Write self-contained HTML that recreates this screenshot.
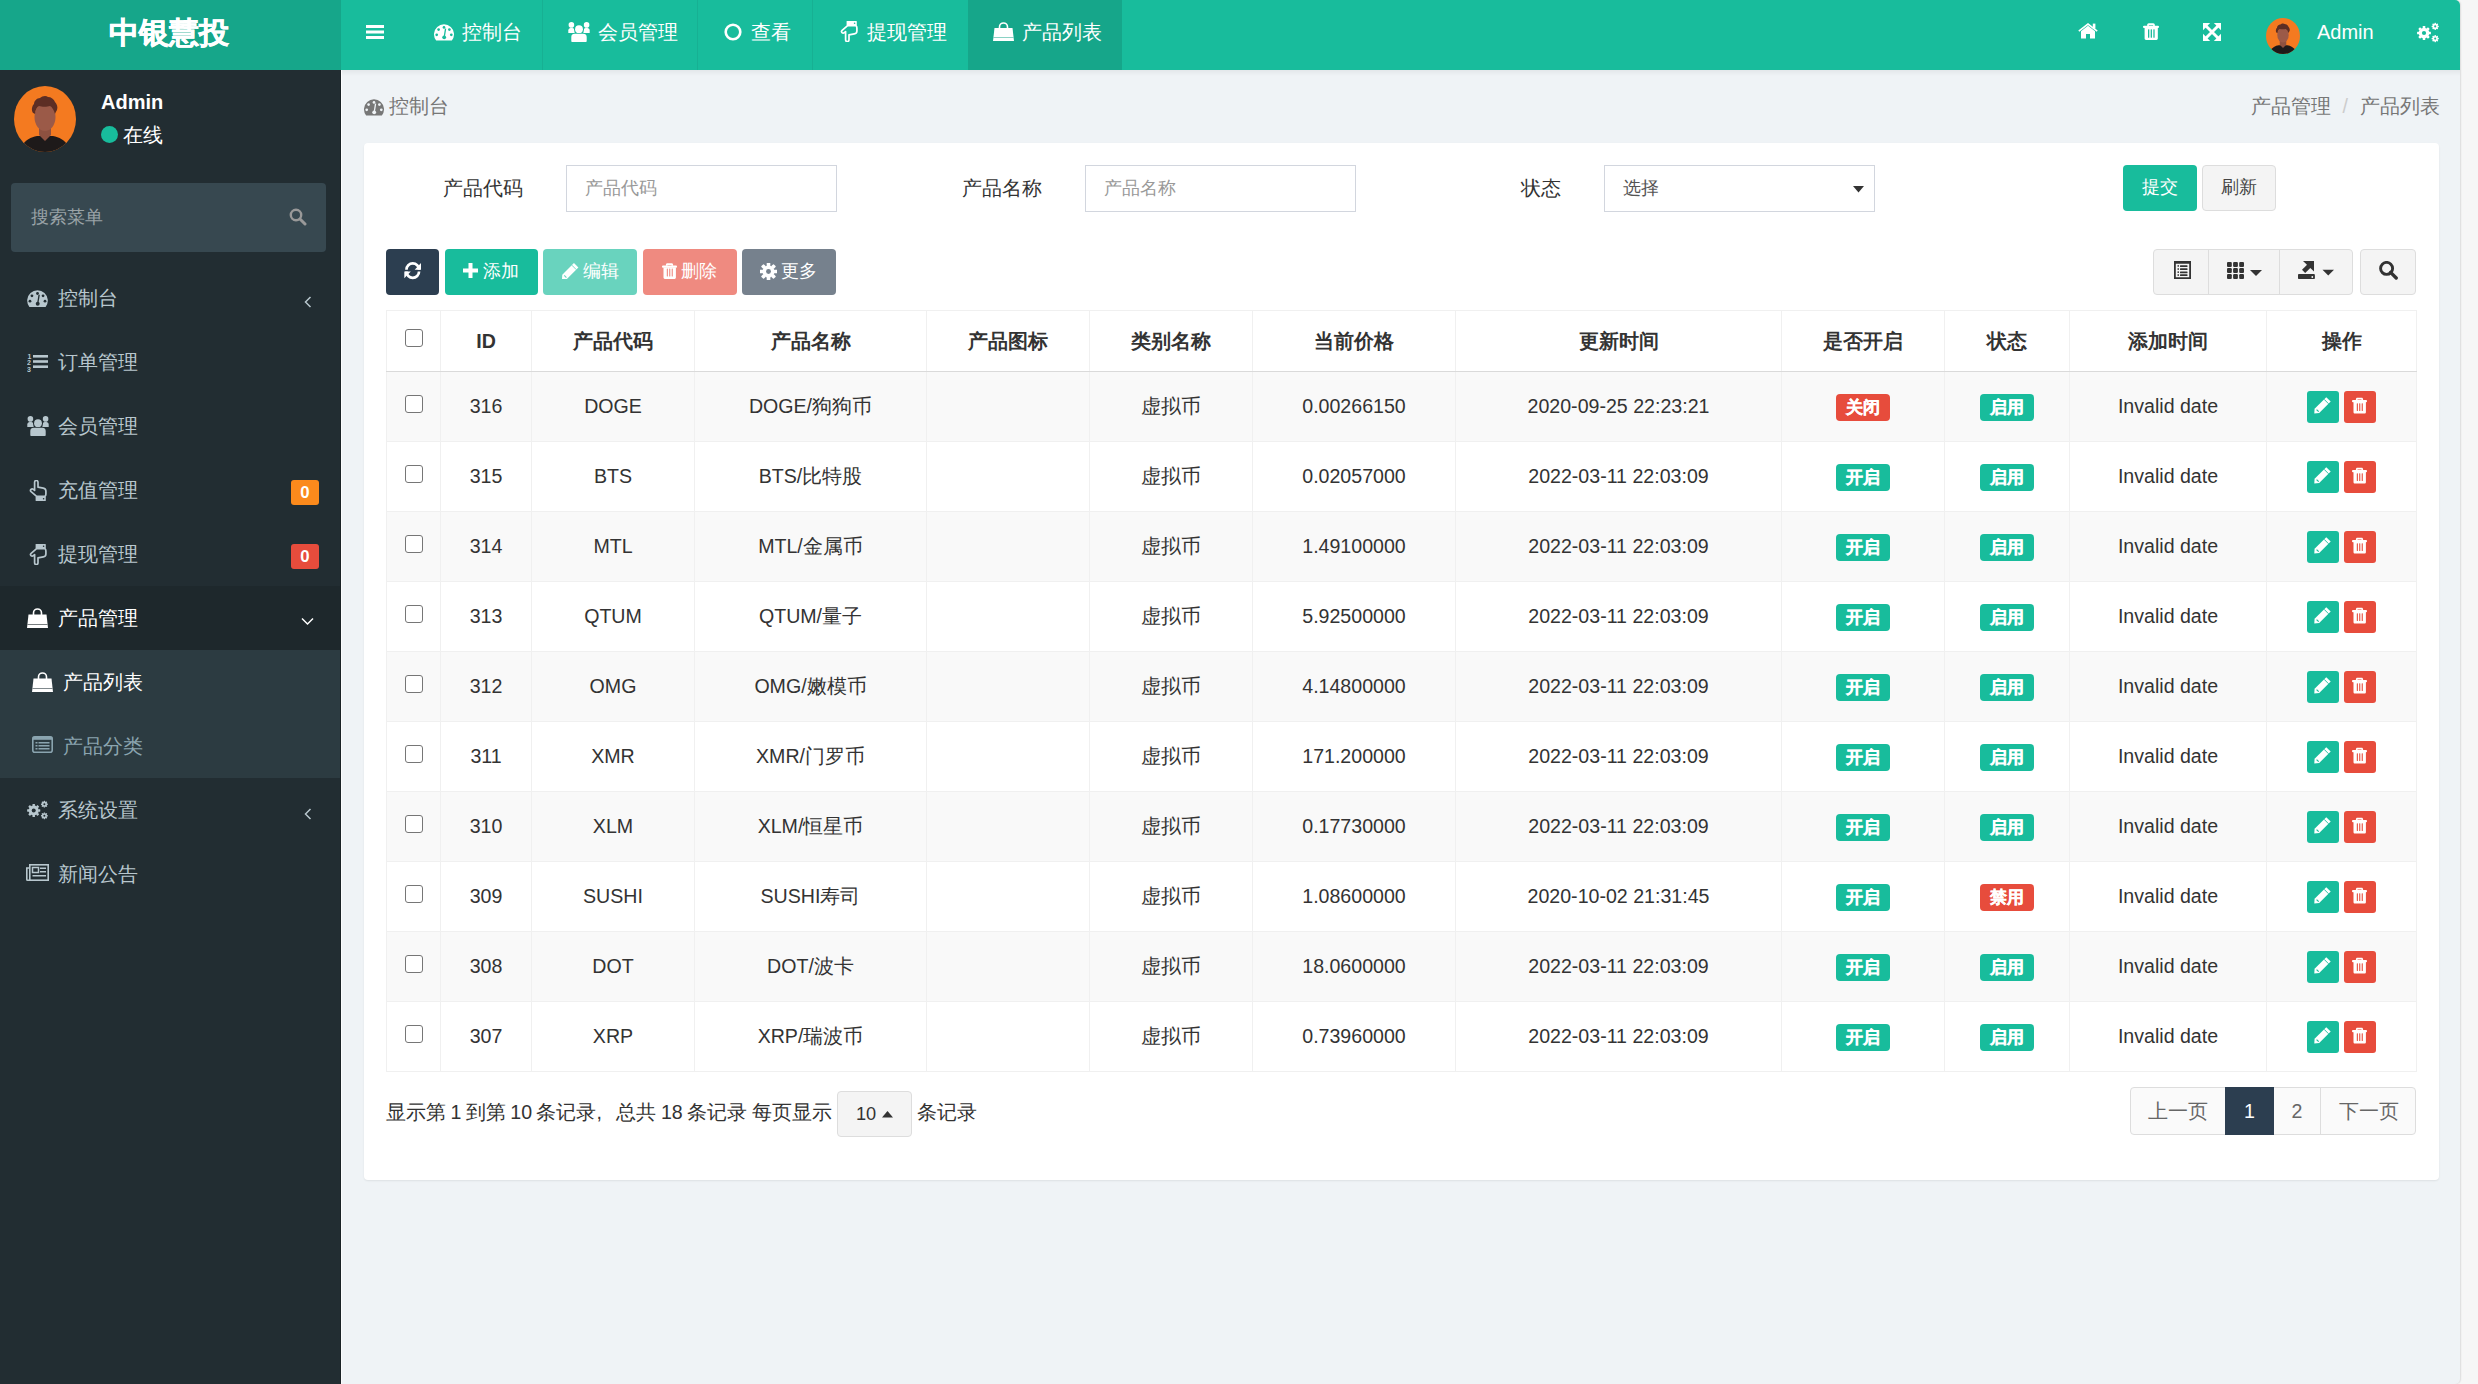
<!DOCTYPE html>
<html><head><meta charset="utf-8">
<style>
*{box-sizing:border-box}
html,body{margin:0;padding:0}
body{width:2478px;height:1384px;overflow:hidden;background:#f6f6f6;font-family:"Liberation Sans",sans-serif;color:#333;position:relative}
.abs{position:absolute}
.wrap{position:absolute;left:0;top:0;width:2460px;height:1384px;background:#eff3f6;border-radius:0 5px 5px 0;overflow:hidden;box-shadow:1px 0 1.5px rgba(0,0,0,.1)}
.logo{left:0;top:0;width:341px;height:70px;background:#16a68a;color:#fff;font-weight:bold;font-size:30px;line-height:66px;text-align:center;text-indent:-3px;-webkit-text-stroke:0.5px #fff}
.nav{left:341px;top:0;width:2120px;height:70px;background:#18bc9c}
.tab{position:absolute;top:0;height:70px;color:#fff;font-size:19.6px;line-height:70px;white-space:nowrap}
.tab span{top:-3px}
.sep{position:absolute;top:0;width:1px;height:70px;background:#17b093}
.side{left:0;top:70px;width:341px;height:1314px;background:#222d32;border-right:1px solid #1a2226}
.content{left:341px;top:70px;width:2120px;height:1314px;border-left:1px solid #fbfcfd}
.mi{position:absolute;left:0;width:340px;height:64px;color:#b8c7ce;font-size:19.6px;line-height:64px;white-space:nowrap}
.mi .ic{position:absolute;top:0;height:64px;display:flex;align-items:center}
.mi .tx{position:absolute;left:58px;top:0}
.box{left:364px;top:143px;width:2075px;height:1037px;background:#fff;border-radius:4px;box-shadow:0 1px 2px rgba(0,0,0,.08)}
.lbl{position:absolute;font-size:19.6px;line-height:47px;color:#333;white-space:nowrap}
.inp{position:absolute;height:47px;width:271px;border:1px solid #d2d6de;background:#fff;font-size:18.2px;line-height:45px;padding-left:18px;color:#999;white-space:nowrap}
.btn{position:absolute;height:46px;border-radius:4px;color:#fff;font-size:18.2px;line-height:46px;text-align:center;white-space:nowrap}
table.t{position:absolute;left:386px;top:310px;width:2030px;border-collapse:collapse;font-size:19.6px;table-layout:fixed}
.t th,.t td{border:1px solid #f0f0f0;text-align:center;padding:0;white-space:nowrap}
.t th{height:61px;font-weight:bold;border-bottom:1px solid #dadada;color:#333}
.t td{height:70px;color:#333}
.t tbody tr:nth-child(odd) td{background:#f9f9f9}
.cb{display:inline-block;width:18px;height:18px;border:1.4px solid #767676;border-radius:3px;background:#fff;vertical-align:middle;position:relative;top:-4px}
.lab{display:inline-block;height:27px;line-height:27px;padding:0 0;width:54px;border-radius:4px;color:#fff;font-weight:bold;font-size:16.8px;-webkit-text-stroke:0.35px #fff;position:relative;top:1px}
.ob{display:inline-block;width:32px;height:32px;border-radius:3px;vertical-align:middle;position:relative}
svg{display:block}
</style></head><body>
<div class="wrap">
  <!-- header -->
  <div class="abs logo">中银慧投</div>
  <div class="abs nav">
    <!-- hamburger -->
    <svg class="abs" style="left:25px;top:24px" width="18" height="16" viewBox="0 0 18 16"><rect x="0" y="1" width="18" height="3" fill="#fff"/><rect x="0" y="6.5" width="18" height="3" fill="#fff"/><rect x="0" y="12" width="18" height="3" fill="#fff"/></svg>
    <div class="tab" style="left:93px">
      <svg class="abs" style="left:0;top:24px" width="20" height="16.5" viewBox="0 0 20 16.5"><path d="M2.15 16.5A10 10 0 1 1 17.85 16.5z" fill="#fff"/><circle cx="10" cy="3.4" r="1.35" fill="#18bc9c"/><circle cx="4.6" cy="5.6" r="1.35" fill="#18bc9c"/><circle cx="15.4" cy="5.6" r="1.35" fill="#18bc9c"/><circle cx="2.7" cy="10.8" r="1.35" fill="#18bc9c"/><circle cx="17.3" cy="10.8" r="1.35" fill="#18bc9c"/><path d="M11.6 4.6L10.4 12" stroke="#18bc9c" stroke-width="1.3"/><circle cx="10.2" cy="13.3" r="1.9" fill="#18bc9c"/></svg>
      <span class="abs" style="left:28px">控制台</span>
    </div>
    <div class="sep" style="left:201px"></div>
    <div class="tab" style="left:227px">
      <svg class="abs" style="left:0;top:22px" width="22" height="20" viewBox="0 0 22 20"><circle cx="3.4" cy="2.9" r="2.8" fill="#fff"/><circle cx="18.6" cy="2.9" r="2.8" fill="#fff"/><path d="M0.3 11V8.6C0.3 7 1.3 6 2.8 6H4.2C5.6 6 6.6 7 6.6 8.6V11z" fill="#fff"/><path d="M15.4 11V8.6C15.4 7 16.4 6 17.8 6H19.2C20.7 6 21.7 7 21.7 8.6V11z" fill="#fff"/><circle cx="11" cy="7.2" r="4.9" fill="#18bc9c"/><circle cx="11" cy="7.2" r="3.9" fill="#fff"/><path d="M3.3 20V15C3.3 13 4.7 11.8 6.6 11.8H15.4C17.3 11.8 18.7 13 18.7 15V19.2C18.7 19.7 18.4 20 17.9 20H4.1C3.6 20 3.3 19.7 3.3 19.2z" fill="#fff"/></svg>
      <span class="abs" style="left:30px">会员管理</span>
    </div>
    <div class="sep" style="left:356px"></div>
    <div class="tab" style="left:383px">
      <svg class="abs" style="left:0;top:23px" width="18" height="18" viewBox="0 0 18 18"><circle cx="9" cy="9" r="7.3" fill="none" stroke="#fff" stroke-width="2.6"/></svg>
      <span class="abs" style="left:27px">查看</span>
    </div>
    <div class="sep" style="left:471px"></div>
    <div class="tab" style="left:499px">
      <svg class="abs" style="left:0;top:21px" width="18" height="21" viewBox="0 0 18 21"><g transform="translate(0,21) scale(1,-1)"><path d="M5.6 9.6V2.3C5.6 1.2 6.3 0.5 7.3 0.5S9 1.2 9 2.3V7.2L14.3 8.1C15.9 8.4 16.9 9.5 16.9 11.1V13.9C16.9 15 16.5 15.8 15.9 16.3H7.6L2.1 11.6C1.4 10.9 1.4 9.9 2 9.3 2.7 8.7 3.6 8.7 4.3 9.3L5.6 10.4z" fill="none" stroke="#fff" stroke-width="1.7" stroke-linejoin="round"/><rect x="6.6" y="16.4" width="10.2" height="4.6" rx=".6" fill="#fff"/><circle cx="14.6" cy="18.8" r=".8" fill="#18bc9c"/></g></svg>
      <span class="abs" style="left:27px">提现管理</span>
    </div>
    <div class="abs" style="left:627px;top:0;width:154px;height:70px;background:#16a68a"></div>
    <div class="tab" style="left:652px">
      <svg class="abs" style="left:0;top:22px" width="21" height="19" viewBox="0 0 21 19"><path d="M1.5 6h18l1.5 13H0z" fill="#fff"/><path d="M6.5 8V5a4 4 0 0 1 8 0v3" fill="none" stroke="#fff" stroke-width="1.6"/><rect x="0.5" y="15" width="20" height="1" fill="#16a68a" opacity=".5"/></svg>
      <span class="abs" style="left:29px">产品列表</span>
    </div>
    <!-- right icons -->
    <svg class="abs" style="left:1737px;top:23px" width="20" height="16" viewBox="0 0 20 16"><path d="M0.8 8.2L10 1 19.2 8.2" fill="none" stroke="#fff" stroke-width="1.6"/><rect x="14.8" y="0.6" width="2.6" height="5" fill="#fff"/><path d="M3 8.2L10 2.8 17 8.2V15.6H12V11H8V15.6H3z" fill="#fff"/></svg>
    <svg class="abs" style="left:1802px;top:23px" width="16" height="17.5" viewBox="8 6.6 15 16.4"><rect x="8" y="9.1" width="15" height="2.2" rx="1" fill="#fff"/><path d="M11.9 9.3V8.4c0-.9.6-1.6 1.5-1.6h4.2c.9 0 1.5.7 1.5 1.6v.9h-1.6V8.6h-4V9.3z" fill="#fff"/><path d="M9.5 11h12.4v10.2c0 .8-.6 1.3-1.3 1.3H10.8c-.7 0-1.3-.5-1.3-1.3z" fill="#fff"/><g fill="#18bc9c"><rect x="12.7" y="12.4" width="1.2" height="8" rx=".5"/><rect x="15.2" y="12.4" width="1.2" height="8" rx=".5"/><rect x="17.7" y="12.4" width="1.2" height="8" rx=".5"/></g></svg>
    <svg class="abs" style="left:1862px;top:23px" width="18" height="18" viewBox="0 0 18 18"><g fill="#fff"><path d="M0 0h7.2L0 7.2z"/><path d="M18 0v7.2L10.8 0z"/><path d="M0 18v-7.2L7.2 18z"/><path d="M18 18h-7.2L18 10.8z"/></g><path d="M2.5 2.5l13 13M15.5 2.5l-13 13" stroke="#fff" stroke-width="2.9"/></svg>
    <div class="abs" style="left:1925px;top:18px;width:34px;height:36px;border-radius:50%;background:#f47a20;overflow:hidden">
      <svg width="34" height="36" viewBox="0 0 62 66"><path d="M8 66V60c3-6 9-9 15-10h16c6 1 12 4 15 10v6z" fill="#1e1a1a"/><path d="M25 40h12v9l-6 6-6-6z" fill="#8e5140"/><ellipse cx="31" cy="31" rx="10.5" ry="14" fill="#9b5a48"/><path d="M19 27c-2-3-1-7 1-9 0-3 3-6 6-6 2-2 6-3 8-1 3 0 6 2 7 5 2 2 3 5 2 8-1 2-2 3-2 4-1-4-3-7-5-8-3 1-8 1-11 0-2 1-4 4-4 8-1-1-2-1-2-1z" fill="#5d2e24"/></svg>
    </div>
    <div class="tab" style="left:1976px;font-size:20px"><span class="abs" style="left:0">Admin</span></div>
    <svg class="abs" style="left:2076px;top:22px" width="23" height="21" viewBox="0 0 23 21"><circle cx="7" cy="11" r="5.3" fill="#fff"/><rect x="5.70" y="4.10" width="2.6" height="2.2" rx="0.4" fill="#fff" transform="rotate(0.0 7 11)"/><rect x="5.70" y="4.10" width="2.6" height="2.2" rx="0.4" fill="#fff" transform="rotate(45.0 7 11)"/><rect x="5.70" y="4.10" width="2.6" height="2.2" rx="0.4" fill="#fff" transform="rotate(90.0 7 11)"/><rect x="5.70" y="4.10" width="2.6" height="2.2" rx="0.4" fill="#fff" transform="rotate(135.0 7 11)"/><rect x="5.70" y="4.10" width="2.6" height="2.2" rx="0.4" fill="#fff" transform="rotate(180.0 7 11)"/><rect x="5.70" y="4.10" width="2.6" height="2.2" rx="0.4" fill="#fff" transform="rotate(225.0 7 11)"/><rect x="5.70" y="4.10" width="2.6" height="2.2" rx="0.4" fill="#fff" transform="rotate(270.0 7 11)"/><rect x="5.70" y="4.10" width="2.6" height="2.2" rx="0.4" fill="#fff" transform="rotate(315.0 7 11)"/><circle cx="7" cy="11" r="2.1" fill="#18bc9c"/><circle cx="18.2" cy="4.4" r="2.7" fill="#fff"/><rect x="17.45" y="0.80" width="1.5" height="1.5" rx="0.4" fill="#fff" transform="rotate(0.0 18.2 4.4)"/><rect x="17.45" y="0.80" width="1.5" height="1.5" rx="0.4" fill="#fff" transform="rotate(45.0 18.2 4.4)"/><rect x="17.45" y="0.80" width="1.5" height="1.5" rx="0.4" fill="#fff" transform="rotate(90.0 18.2 4.4)"/><rect x="17.45" y="0.80" width="1.5" height="1.5" rx="0.4" fill="#fff" transform="rotate(135.0 18.2 4.4)"/><rect x="17.45" y="0.80" width="1.5" height="1.5" rx="0.4" fill="#fff" transform="rotate(180.0 18.2 4.4)"/><rect x="17.45" y="0.80" width="1.5" height="1.5" rx="0.4" fill="#fff" transform="rotate(225.0 18.2 4.4)"/><rect x="17.45" y="0.80" width="1.5" height="1.5" rx="0.4" fill="#fff" transform="rotate(270.0 18.2 4.4)"/><rect x="17.45" y="0.80" width="1.5" height="1.5" rx="0.4" fill="#fff" transform="rotate(315.0 18.2 4.4)"/><circle cx="18.2" cy="4.4" r="1.05" fill="#18bc9c"/><circle cx="18.2" cy="16.6" r="2.7" fill="#fff"/><rect x="17.45" y="13.00" width="1.5" height="1.5" rx="0.4" fill="#fff" transform="rotate(0.0 18.2 16.6)"/><rect x="17.45" y="13.00" width="1.5" height="1.5" rx="0.4" fill="#fff" transform="rotate(45.0 18.2 16.6)"/><rect x="17.45" y="13.00" width="1.5" height="1.5" rx="0.4" fill="#fff" transform="rotate(90.0 18.2 16.6)"/><rect x="17.45" y="13.00" width="1.5" height="1.5" rx="0.4" fill="#fff" transform="rotate(135.0 18.2 16.6)"/><rect x="17.45" y="13.00" width="1.5" height="1.5" rx="0.4" fill="#fff" transform="rotate(180.0 18.2 16.6)"/><rect x="17.45" y="13.00" width="1.5" height="1.5" rx="0.4" fill="#fff" transform="rotate(225.0 18.2 16.6)"/><rect x="17.45" y="13.00" width="1.5" height="1.5" rx="0.4" fill="#fff" transform="rotate(270.0 18.2 16.6)"/><rect x="17.45" y="13.00" width="1.5" height="1.5" rx="0.4" fill="#fff" transform="rotate(315.0 18.2 16.6)"/><circle cx="18.2" cy="16.6" r="1.05" fill="#18bc9c"/></svg>
  </div>

  <!-- sidebar -->
  <div class="abs side">
    <div class="abs" style="left:14px;top:16px;width:62px;height:66px;border-radius:50%;background:#f47a20;overflow:hidden">
      <svg width="62" height="66" viewBox="0 0 62 66"><path d="M8 66V60c3-6 9-9 15-10h16c6 1 12 4 15 10v6z" fill="#1e1a1a"/><path d="M25 40h12v9l-6 6-6-6z" fill="#8e5140"/><ellipse cx="31" cy="31" rx="10.5" ry="14" fill="#9b5a48"/><path d="M19 27c-2-3-1-7 1-9 0-3 3-6 6-6 2-2 6-3 8-1 3 0 6 2 7 5 2 2 3 5 2 8-1 2-2 3-2 4-1-4-3-7-5-8-3 1-8 1-11 0-2 1-4 4-4 8-1-1-2-1-2-1z" fill="#5d2e24"/></svg>
    </div>
    <div class="abs" style="left:101px;top:20px;color:#fff;font-weight:bold;font-size:20px;line-height:24px">Admin</div>
    <div class="abs" style="left:101px;top:56px;width:17px;height:17px;border-radius:50%;background:#18bc9c"></div>
    <div class="abs" style="left:123px;top:51px;color:#fff;font-size:19.6px;line-height:28px">在线</div>
    <div class="abs" style="left:11px;top:113px;width:315px;height:69px;background:#374850;border-radius:4px">
      <span class="abs" style="left:20px;top:0;line-height:69px;font-size:18.2px;color:#9aa3a7">搜索菜单</span>
      <svg class="abs" style="left:278px;top:25px" width="18" height="18" viewBox="0 0 18 18"><circle cx="7" cy="7" r="5.2" fill="none" stroke="#999" stroke-width="2.4"/><path d="M11 11l5 5" stroke="#999" stroke-width="3" stroke-linecap="round"/></svg>
    </div>
    <!-- menu -->
    <div class="mi" style="top:196px"><span class="ic" style="left:27px"><svg width="21" height="17" viewBox="0 0 20 16.5"><path d="M2.15 16.5A10 10 0 1 1 17.85 16.5z" fill="#b8c7ce"/><circle cx="10" cy="3.4" r="1.35" fill="#222d32"/><circle cx="4.6" cy="5.6" r="1.35" fill="#222d32"/><circle cx="15.4" cy="5.6" r="1.35" fill="#222d32"/><circle cx="2.7" cy="10.8" r="1.35" fill="#222d32"/><circle cx="17.3" cy="10.8" r="1.35" fill="#222d32"/><path d="M11.6 4.6L10.4 12" stroke="#222d32" stroke-width="1.3"/><circle cx="10.2" cy="13.3" r="1.9" fill="#222d32"/></svg></span><span class="tx">控制台</span>
      <svg class="abs" style="left:304px;top:30px" width="8" height="12" viewBox="0 0 8 12"><path d="M6.5 1L1.5 6l5 5" fill="none" stroke="#b8c7ce" stroke-width="1.5"/></svg></div>
    <div class="mi" style="top:260px"><span class="ic" style="left:27px"><svg width="22" height="21" viewBox="0 0 22 21"><g fill="#b8c7ce" font-family="Liberation Sans" font-weight="bold" font-size="7"><text x="0.5" y="6.5">1</text><text x="0" y="13">2</text><text x="0" y="19.5">3</text></g><g fill="#b8c7ce"><rect x="6" y="3" width="15" height="2.6"/><rect x="6" y="8.2" width="15" height="2.6"/><rect x="6" y="13.4" width="15" height="2.6"/></g></svg></span><span class="tx">订单管理</span></div>
    <div class="mi" style="top:324px"><span class="ic" style="left:27px"><svg width="22" height="20" viewBox="0 0 22 20"><circle cx="3.4" cy="2.9" r="2.8" fill="#b8c7ce"/><circle cx="18.6" cy="2.9" r="2.8" fill="#b8c7ce"/><path d="M0.3 11V8.6C0.3 7 1.3 6 2.8 6H4.2C5.6 6 6.6 7 6.6 8.6V11z" fill="#b8c7ce"/><path d="M15.4 11V8.6C15.4 7 16.4 6 17.8 6H19.2C20.7 6 21.7 7 21.7 8.6V11z" fill="#b8c7ce"/><circle cx="11" cy="7.2" r="4.9" fill="#222d32"/><circle cx="11" cy="7.2" r="3.9" fill="#b8c7ce"/><path d="M3.3 20V15C3.3 13 4.7 11.8 6.6 11.8H15.4C17.3 11.8 18.7 13 18.7 15V19.2C18.7 19.7 18.4 20 17.9 20H4.1C3.6 20 3.3 19.7 3.3 19.2z" fill="#b8c7ce"/></svg></span><span class="tx">会员管理</span></div>
    <div class="mi" style="top:388px"><span class="ic" style="left:29px"><svg width="18" height="21" viewBox="0 0 18 21"><g><path d="M5.6 9.6V2.3C5.6 1.2 6.3 0.5 7.3 0.5S9 1.2 9 2.3V7.2L14.3 8.1C15.9 8.4 16.9 9.5 16.9 11.1V13.9C16.9 15 16.5 15.8 15.9 16.3H7.6L2.1 11.6C1.4 10.9 1.4 9.9 2 9.3 2.7 8.7 3.6 8.7 4.3 9.3L5.6 10.4z" fill="none" stroke="#b8c7ce" stroke-width="1.7" stroke-linejoin="round"/><rect x="6.6" y="16.4" width="10.2" height="4.6" rx=".6" fill="#b8c7ce"/><circle cx="14.6" cy="18.8" r=".8" fill="#222d32"/></g></svg></span><span class="tx">充值管理</span>
      <div class="abs" style="left:291px;top:22px;width:28px;height:25px;border-radius:3px;background:#fb8a1c;color:#fff;font-weight:bold;font-size:16.8px;line-height:25px;text-align:center">0</div></div>
    <div class="mi" style="top:452px"><span class="ic" style="left:29px"><svg width="18" height="21" viewBox="0 0 18 21"><g transform="translate(0,21) scale(1,-1)"><path d="M5.6 9.6V2.3C5.6 1.2 6.3 0.5 7.3 0.5S9 1.2 9 2.3V7.2L14.3 8.1C15.9 8.4 16.9 9.5 16.9 11.1V13.9C16.9 15 16.5 15.8 15.9 16.3H7.6L2.1 11.6C1.4 10.9 1.4 9.9 2 9.3 2.7 8.7 3.6 8.7 4.3 9.3L5.6 10.4z" fill="none" stroke="#b8c7ce" stroke-width="1.7" stroke-linejoin="round"/><rect x="6.6" y="16.4" width="10.2" height="4.6" rx=".6" fill="#b8c7ce"/><circle cx="14.6" cy="18.8" r=".8" fill="#222d32"/></g></svg></span><span class="tx">提现管理</span>
      <div class="abs" style="left:291px;top:22px;width:28px;height:25px;border-radius:3px;background:#e74c3c;color:#fff;font-weight:bold;font-size:16.8px;line-height:25px;text-align:center">0</div></div>
    <div class="mi" style="top:516px;background:#1e282c;color:#fff"><span class="ic" style="left:27px"><svg width="21" height="20" viewBox="0 0 21 20"><path d="M1.5 6.5h18l1.5 13.5H0z" fill="#fff"/><path d="M6.5 8.5V5a4 4 0 0 1 8 0v3.5" fill="none" stroke="#fff" stroke-width="1.6"/><rect x="0.5" y="16" width="20" height="1" fill="#1e282c" opacity=".6"/></svg></span><span class="tx">产品管理</span>
      <svg class="abs" style="left:301px;top:31px" width="13" height="9" viewBox="0 0 13 9"><path d="M1 1.5l5.5 5.5 5.5-5.5" fill="none" stroke="#fff" stroke-width="1.5"/></svg></div>
    <div class="abs" style="left:0;top:580px;width:340px;height:128px;background:#2c3b41"></div>
    <div class="mi" style="top:580px;color:#fff"><span class="ic" style="left:32px"><svg width="21" height="20" viewBox="0 0 21 20"><path d="M1.5 6.5h18l1.5 13.5H0z" fill="#fff"/><path d="M6.5 8.5V5a4 4 0 0 1 8 0v3.5" fill="none" stroke="#fff" stroke-width="1.6"/><rect x="0.5" y="16" width="20" height="1" fill="#2c3b41" opacity=".6"/></svg></span><span class="tx" style="left:63px">产品列表</span></div>
    <div class="mi" style="top:644px;color:#8aa4af"><span class="ic" style="left:32px;top:-2px"><svg width="21" height="17" viewBox="0 0 21 17"><rect x="0.8" y="0.8" width="19.4" height="15.4" rx="2" fill="none" stroke="#8aa4af" stroke-width="1.6"/><rect x="0.8" y="0.8" width="19.4" height="3" fill="#8aa4af"/><rect x="3.5" y="6" width="2" height="1.5" fill="#8aa4af"/><rect x="6.5" y="6" width="11" height="1.5" fill="#8aa4af"/><rect x="3.5" y="9" width="2" height="1.5" fill="#8aa4af"/><rect x="6.5" y="9" width="11" height="1.5" fill="#8aa4af"/><rect x="3.5" y="12" width="2" height="1.5" fill="#8aa4af"/><rect x="6.5" y="12" width="11" height="1.5" fill="#8aa4af"/></svg></span><span class="tx" style="left:63px">产品分类</span></div>
    <div class="mi" style="top:708px"><span class="ic" style="left:27px"><svg width="22" height="20" viewBox="0 0 23 21"><circle cx="7" cy="11" r="5.3" fill="#b8c7ce"/><rect x="5.70" y="4.10" width="2.6" height="2.2" rx="0.4" fill="#b8c7ce" transform="rotate(0.0 7 11)"/><rect x="5.70" y="4.10" width="2.6" height="2.2" rx="0.4" fill="#b8c7ce" transform="rotate(45.0 7 11)"/><rect x="5.70" y="4.10" width="2.6" height="2.2" rx="0.4" fill="#b8c7ce" transform="rotate(90.0 7 11)"/><rect x="5.70" y="4.10" width="2.6" height="2.2" rx="0.4" fill="#b8c7ce" transform="rotate(135.0 7 11)"/><rect x="5.70" y="4.10" width="2.6" height="2.2" rx="0.4" fill="#b8c7ce" transform="rotate(180.0 7 11)"/><rect x="5.70" y="4.10" width="2.6" height="2.2" rx="0.4" fill="#b8c7ce" transform="rotate(225.0 7 11)"/><rect x="5.70" y="4.10" width="2.6" height="2.2" rx="0.4" fill="#b8c7ce" transform="rotate(270.0 7 11)"/><rect x="5.70" y="4.10" width="2.6" height="2.2" rx="0.4" fill="#b8c7ce" transform="rotate(315.0 7 11)"/><circle cx="7" cy="11" r="2.1" fill="#222d32"/><circle cx="18.2" cy="4.4" r="2.7" fill="#b8c7ce"/><rect x="17.45" y="0.80" width="1.5" height="1.5" rx="0.4" fill="#b8c7ce" transform="rotate(0.0 18.2 4.4)"/><rect x="17.45" y="0.80" width="1.5" height="1.5" rx="0.4" fill="#b8c7ce" transform="rotate(45.0 18.2 4.4)"/><rect x="17.45" y="0.80" width="1.5" height="1.5" rx="0.4" fill="#b8c7ce" transform="rotate(90.0 18.2 4.4)"/><rect x="17.45" y="0.80" width="1.5" height="1.5" rx="0.4" fill="#b8c7ce" transform="rotate(135.0 18.2 4.4)"/><rect x="17.45" y="0.80" width="1.5" height="1.5" rx="0.4" fill="#b8c7ce" transform="rotate(180.0 18.2 4.4)"/><rect x="17.45" y="0.80" width="1.5" height="1.5" rx="0.4" fill="#b8c7ce" transform="rotate(225.0 18.2 4.4)"/><rect x="17.45" y="0.80" width="1.5" height="1.5" rx="0.4" fill="#b8c7ce" transform="rotate(270.0 18.2 4.4)"/><rect x="17.45" y="0.80" width="1.5" height="1.5" rx="0.4" fill="#b8c7ce" transform="rotate(315.0 18.2 4.4)"/><circle cx="18.2" cy="4.4" r="1.05" fill="#222d32"/><circle cx="18.2" cy="16.6" r="2.7" fill="#b8c7ce"/><rect x="17.45" y="13.00" width="1.5" height="1.5" rx="0.4" fill="#b8c7ce" transform="rotate(0.0 18.2 16.6)"/><rect x="17.45" y="13.00" width="1.5" height="1.5" rx="0.4" fill="#b8c7ce" transform="rotate(45.0 18.2 16.6)"/><rect x="17.45" y="13.00" width="1.5" height="1.5" rx="0.4" fill="#b8c7ce" transform="rotate(90.0 18.2 16.6)"/><rect x="17.45" y="13.00" width="1.5" height="1.5" rx="0.4" fill="#b8c7ce" transform="rotate(135.0 18.2 16.6)"/><rect x="17.45" y="13.00" width="1.5" height="1.5" rx="0.4" fill="#b8c7ce" transform="rotate(180.0 18.2 16.6)"/><rect x="17.45" y="13.00" width="1.5" height="1.5" rx="0.4" fill="#b8c7ce" transform="rotate(225.0 18.2 16.6)"/><rect x="17.45" y="13.00" width="1.5" height="1.5" rx="0.4" fill="#b8c7ce" transform="rotate(270.0 18.2 16.6)"/><rect x="17.45" y="13.00" width="1.5" height="1.5" rx="0.4" fill="#b8c7ce" transform="rotate(315.0 18.2 16.6)"/><circle cx="18.2" cy="16.6" r="1.05" fill="#222d32"/></svg></span><span class="tx">系统设置</span>
      <svg class="abs" style="left:304px;top:30px" width="8" height="12" viewBox="0 0 8 12"><path d="M6.5 1L1.5 6l5 5" fill="none" stroke="#b8c7ce" stroke-width="1.5"/></svg></div>
    <div class="mi" style="top:772px"><span class="ic" style="left:26px;top:-1.5px"><svg width="23" height="17" viewBox="0 0 23 17"><rect x="3.8" y="0.8" width="18.4" height="15.4" fill="none" stroke="#b8c7ce" stroke-width="1.6"/><path d="M3.8 4H0.8v11.5c0 .5.3.7.7.7h2.3" fill="none" stroke="#b8c7ce" stroke-width="1.6"/><rect x="6.5" y="3.5" width="6" height="5" fill="none" stroke="#b8c7ce" stroke-width="1.5"/><rect x="14" y="3.5" width="6" height="1.5" fill="#b8c7ce"/><rect x="14" y="7" width="6" height="1.5" fill="#b8c7ce"/><rect x="6.5" y="11" width="13.5" height="1.5" fill="#b8c7ce"/></svg></span><span class="tx">新闻公告</span></div>
  </div>

  <!-- content -->
  <div class="abs content"></div>
  <div class="abs" style="left:342px;top:70px;width:2119px;height:6px;background:linear-gradient(rgba(0,0,0,.05),rgba(0,0,0,0))"></div>
  <svg class="abs" style="left:364px;top:99px" width="20" height="16.5" viewBox="0 0 20 16.5"><path d="M2.15 16.5A10 10 0 1 1 17.85 16.5z" fill="#777"/><circle cx="10" cy="3.4" r="1.35" fill="#eff3f6"/><circle cx="4.6" cy="5.6" r="1.35" fill="#eff3f6"/><circle cx="15.4" cy="5.6" r="1.35" fill="#eff3f6"/><circle cx="2.7" cy="10.8" r="1.35" fill="#eff3f6"/><circle cx="17.3" cy="10.8" r="1.35" fill="#eff3f6"/><path d="M11.6 4.6L10.4 12" stroke="#eff3f6" stroke-width="1.3"/><circle cx="10.2" cy="13.3" r="1.9" fill="#eff3f6"/></svg>
  <div class="abs" style="left:389px;top:91px;font-size:19.6px;line-height:30px;color:#777">控制台</div>
  <div class="abs" style="left:2120px;top:90px;width:2439px;font-size:19.6px;line-height:30px;color:#777"></div>
  <div class="abs" style="right:20px;top:91px;font-size:19.6px;line-height:30px;color:#777;white-space:nowrap">产品管理<span style="color:#ccc;padding:0 12px">/</span>产品列表</div>

  <div class="abs box"></div>
  <!-- form -->
  <div class="lbl" style="left:443px;top:165px">产品代码</div>
  <div class="inp" style="left:566px;top:165px">产品代码</div>
  <div class="lbl" style="left:962px;top:165px">产品名称</div>
  <div class="inp" style="left:1085px;top:165px">产品名称</div>
  <div class="lbl" style="left:1521px;top:165px">状态</div>
  <div class="inp" style="left:1604px;top:165px;color:#555">选择
    <svg class="abs" style="left:248px;top:20px" width="11" height="7" viewBox="0 0 11 7"><path d="M0 0h11L5.5 6.5z" fill="#333"/></svg></div>
  <div class="btn" style="left:2123px;top:165px;width:74px;background:#18bc9c;line-height:44px">提交</div>
  <div class="btn" style="left:2202px;top:165px;width:74px;background:#f4f4f4;border:1px solid #ddd;color:#444;line-height:42px">刷新</div>

  <!-- toolbar -->
  <div class="btn" style="left:386px;top:249px;width:53px;background:#2c3e50">
    <svg class="abs" style="left:18px;top:13px" width="18" height="18" viewBox="0 0 18 18"><path d="M2.45 7.7A6.3 6.3 0 0 1 15.05 7.7" fill="none" stroke="#fff" stroke-width="2.7"/><path d="M10.7 7.7H17V1.1z" fill="#fff"/><path d="M15.05 9.6A6.3 6.3 0 0 1 2.45 9.6" fill="none" stroke="#fff" stroke-width="2.7"/><path d="M0.3 9.6H6.8L0.3 16.2z" fill="#fff"/></svg></div>
  <div class="btn" style="left:445px;top:249px;width:93px;background:#18bc9c;line-height:44px"><svg class="abs" style="left:18px;top:14px" width="15" height="15" viewBox="0 0 15 15"><path d="M5.5 0h4v5.5H15v4H9.5V15h-4V9.5H0v-4h5.5z" fill="#fff"/></svg><span class="abs" style="left:38px">添加</span></div>
  <div class="btn" style="left:543px;top:249px;width:94px;background:#69d3be;line-height:44px"><svg class="abs" style="left:19px;top:13.5px" width="16.5" height="16.5" viewBox="7.3 6.15 16.5 16.5"><path d="M7.6 17.8L19.25 6.15 23.7 10.6 12.2 22.1 7.3 22.6z" fill="#fff"/><path d="M17.1 8.3L21.6 12.8" stroke="#69d3be" stroke-width="0.9"/><path d="M9.6 18.6L11.7 20.7" stroke="#69d3be" stroke-width="1.1"/></svg><span class="abs" style="left:40px">编辑</span></div>
  <div class="btn" style="left:643px;top:249px;width:94px;background:#ef8a80;line-height:44px"><svg class="abs" style="left:19px;top:13.5px" width="15" height="16" viewBox="8 6.6 15 16"><rect x="8" y="9.1" width="15" height="2.2" rx="1" fill="#fff"/><path d="M11.9 9.3V8.4c0-.9.6-1.6 1.5-1.6h4.2c.9 0 1.5.7 1.5 1.6v.9h-1.6V8.6h-4V9.3z" fill="#fff"/><path d="M9.5 11h12.4v10.2c0 .8-.6 1.3-1.3 1.3H10.8c-.7 0-1.3-.5-1.3-1.3z" fill="#fff"/><g fill="#ef8a80"><rect x="12.8" y="12.2" width="1.1" height="7.8" rx=".5"/><rect x="15.2" y="12.2" width="1.1" height="7.8" rx=".5"/><rect x="17.7" y="12.2" width="1.1" height="7.8" rx=".5"/></g></svg><span class="abs" style="left:38px">删除</span></div>
  <div class="btn" style="left:742px;top:249px;width:94px;background:#76818d;line-height:44px"><svg class="abs" style="left:18px;top:13.5px" width="17" height="17" viewBox="0 0 16 16"><g fill="#fff"><circle cx="8" cy="8" r="5.6"/><rect x="12.90" y="6.30" width="3.4" height="3.4" rx="0.6" transform="rotate(0 14.60 8.00)"/><rect x="10.97" y="10.97" width="3.4" height="3.4" rx="0.6" transform="rotate(45 12.67 12.67)"/><rect x="6.30" y="12.90" width="3.4" height="3.4" rx="0.6" transform="rotate(90 8.00 14.60)"/><rect x="1.63" y="10.97" width="3.4" height="3.4" rx="0.6" transform="rotate(135 3.33 12.67)"/><rect x="-0.30" y="6.30" width="3.4" height="3.4" rx="0.6" transform="rotate(180 1.40 8.00)"/><rect x="1.63" y="1.63" width="3.4" height="3.4" rx="0.6" transform="rotate(225 3.33 3.33)"/><rect x="6.30" y="-0.30" width="3.4" height="3.4" rx="0.6" transform="rotate(270 8.00 1.40)"/><rect x="10.97" y="1.63" width="3.4" height="3.4" rx="0.6" transform="rotate(315 12.67 3.33)"/></g><circle cx="8" cy="8" r="2.3" fill="#76818d"/></svg><span class="abs" style="left:39px">更多</span></div>

  <div class="abs" style="left:2153px;top:249px;width:200px;height:46px;border:1px solid #ddd;border-radius:4px;background:#f4f4f4"></div>
  <div class="abs" style="left:2208px;top:250px;width:1px;height:44px;background:#ddd"></div>
  <div class="abs" style="left:2279px;top:250px;width:1px;height:44px;background:#ddd"></div>
  <svg class="abs" style="left:2174px;top:261px" width="17" height="18" viewBox="0 0 17 18"><path d="M0 0h17v18H0z M1.8 2.8v13.4h13.4V2.8z" fill="#333" fill-rule="evenodd"/><g fill="#333"><rect x="3.5" y="4.2" width="1.5" height="1.5"/><rect x="6" y="4.2" width="7.5" height="1.8" rx=".5"/><rect x="3.5" y="7.3" width="1.5" height="1.5"/><rect x="6" y="7.3" width="7.5" height="1.8" rx=".5"/><rect x="3.5" y="10.4" width="1.5" height="1.5"/><rect x="6" y="10.4" width="7.5" height="1.8" rx=".5"/><rect x="3.5" y="13.3" width="1.5" height="1.5"/><rect x="6" y="13.3" width="7.5" height="1.8" rx=".5"/></g></svg>
  <svg class="abs" style="left:2227px;top:262px" width="36" height="18" viewBox="0 0 36 18"><g fill="#333"><rect x="0.00" y="0.00" width="4.8" height="5" rx="1.1"/><rect x="6.10" y="0.00" width="4.8" height="5" rx="1.1"/><rect x="12.20" y="0.00" width="4.8" height="5" rx="1.1"/><rect x="0.00" y="6.05" width="4.8" height="5" rx="1.1"/><rect x="6.10" y="6.05" width="4.8" height="5" rx="1.1"/><rect x="12.20" y="6.05" width="4.8" height="5" rx="1.1"/><rect x="0.00" y="12.10" width="4.8" height="5" rx="1.1"/><rect x="6.10" y="12.10" width="4.8" height="5" rx="1.1"/><rect x="12.20" y="12.10" width="4.8" height="5" rx="1.1"/><path d="M23 8h12l-6 6z"/></g></svg>
  <svg class="abs" style="left:2298px;top:261px" width="38" height="19" viewBox="0 0 38 19"><g fill="#333"><path d="M5 0H16V10.5z"/><path d="M9.6 3.2L12.8 6.4 7.2 12 4 8.8z"/><path d="M1 13.1H15.6c.8 0 1.3.5 1.3 1.3V17c0 .6-.4 1-1 1H0.7c-.4 0-.7-.3-.7-.7V14.4c0-.8.4-1.3 1-1.3z"/><path d="M24.5 8.8h11.5l-5.75 5.75z"/></g><circle cx="14.3" cy="16" r="0.9" fill="#f4f4f4"/></svg>
  <div class="abs" style="left:2360px;top:249px;width:56px;height:46px;border:1px solid #ddd;border-radius:4px;background:#f4f4f4"></div>
  <svg class="abs" style="left:2379px;top:261px" width="19" height="19" viewBox="0 0 19 19"><circle cx="7.6" cy="7.4" r="6" fill="none" stroke="#333" stroke-width="2.9"/><path d="M11.6 11.4l5.6 5.6" stroke="#333" stroke-width="3.4" stroke-linecap="round"/></svg>

  <!-- table -->
  <table class="t">
    <colgroup><col style="width:54px"><col style="width:91px"><col style="width:163px"><col style="width:232px"><col style="width:163px"><col style="width:163px"><col style="width:203px"><col style="width:326px"><col style="width:163px"><col style="width:125px"><col style="width:197px"><col style="width:150px"></colgroup>
    <thead><tr><th><span class="cb"></span></th><th>ID</th><th>产品代码</th><th>产品名称</th><th>产品图标</th><th>类别名称</th><th>当前价格</th><th>更新时间</th><th>是否开启</th><th>状态</th><th>添加时间</th><th>操作</th></tr></thead>
    <tbody>
<tr><td><span class="cb"></span></td><td>316</td><td>DOGE</td><td>DOGE/狗狗币</td><td></td><td>虚拟币</td><td>0.00266150</td><td>2020-09-25 22:23:21</td><td><span class="lab" style="background:#e74c3c">关闭</span></td><td><span class="lab" style="background:#18bc9c">启用</span></td><td>Invalid date</td><td><span class="ob" style="background:#18bc9c"><svg class="abs" style="left:0;top:0" width="32" height="32" viewBox="0 0 32 32"><path d="M7.6 17.8L19.25 6.15 23.7 10.6 12.2 22.1 7.3 22.6z" fill="#fff"/><path d="M17.1 8.3L21.6 12.8" stroke="#18bc9c" stroke-width="0.9"/><path d="M9.6 18.6L11.7 20.7" stroke="#18bc9c" stroke-width="1.1"/></svg></span><span class="ob" style="background:#e74c3c;margin-left:5px"><svg class="abs" style="left:0;top:0" width="32" height="32" viewBox="0 0 32 32"><rect x="8" y="9.1" width="15" height="2.2" rx="1" fill="#fff"/><path d="M11.9 9.3V8.4c0-.9.6-1.6 1.5-1.6h4.2c.9 0 1.5.7 1.5 1.6v.9h-1.6V8.6h-4V9.3z" fill="#fff"/><path d="M9.5 11h12.4v10.2c0 .8-.6 1.3-1.3 1.3H10.8c-.7 0-1.3-.5-1.3-1.3z" fill="#fff"/><g fill="#e74c3c"><rect x="12.8" y="12.2" width="1.1" height="7.8" rx=".5"/><rect x="15.2" y="12.2" width="1.1" height="7.8" rx=".5"/><rect x="17.7" y="12.2" width="1.1" height="7.8" rx=".5"/></g></svg></span></td></tr>
<tr><td><span class="cb"></span></td><td>315</td><td>BTS</td><td>BTS/比特股</td><td></td><td>虚拟币</td><td>0.02057000</td><td>2022-03-11 22:03:09</td><td><span class="lab" style="background:#18bc9c">开启</span></td><td><span class="lab" style="background:#18bc9c">启用</span></td><td>Invalid date</td><td><span class="ob" style="background:#18bc9c"><svg class="abs" style="left:0;top:0" width="32" height="32" viewBox="0 0 32 32"><path d="M7.6 17.8L19.25 6.15 23.7 10.6 12.2 22.1 7.3 22.6z" fill="#fff"/><path d="M17.1 8.3L21.6 12.8" stroke="#18bc9c" stroke-width="0.9"/><path d="M9.6 18.6L11.7 20.7" stroke="#18bc9c" stroke-width="1.1"/></svg></span><span class="ob" style="background:#e74c3c;margin-left:5px"><svg class="abs" style="left:0;top:0" width="32" height="32" viewBox="0 0 32 32"><rect x="8" y="9.1" width="15" height="2.2" rx="1" fill="#fff"/><path d="M11.9 9.3V8.4c0-.9.6-1.6 1.5-1.6h4.2c.9 0 1.5.7 1.5 1.6v.9h-1.6V8.6h-4V9.3z" fill="#fff"/><path d="M9.5 11h12.4v10.2c0 .8-.6 1.3-1.3 1.3H10.8c-.7 0-1.3-.5-1.3-1.3z" fill="#fff"/><g fill="#e74c3c"><rect x="12.8" y="12.2" width="1.1" height="7.8" rx=".5"/><rect x="15.2" y="12.2" width="1.1" height="7.8" rx=".5"/><rect x="17.7" y="12.2" width="1.1" height="7.8" rx=".5"/></g></svg></span></td></tr>
<tr><td><span class="cb"></span></td><td>314</td><td>MTL</td><td>MTL/金属币</td><td></td><td>虚拟币</td><td>1.49100000</td><td>2022-03-11 22:03:09</td><td><span class="lab" style="background:#18bc9c">开启</span></td><td><span class="lab" style="background:#18bc9c">启用</span></td><td>Invalid date</td><td><span class="ob" style="background:#18bc9c"><svg class="abs" style="left:0;top:0" width="32" height="32" viewBox="0 0 32 32"><path d="M7.6 17.8L19.25 6.15 23.7 10.6 12.2 22.1 7.3 22.6z" fill="#fff"/><path d="M17.1 8.3L21.6 12.8" stroke="#18bc9c" stroke-width="0.9"/><path d="M9.6 18.6L11.7 20.7" stroke="#18bc9c" stroke-width="1.1"/></svg></span><span class="ob" style="background:#e74c3c;margin-left:5px"><svg class="abs" style="left:0;top:0" width="32" height="32" viewBox="0 0 32 32"><rect x="8" y="9.1" width="15" height="2.2" rx="1" fill="#fff"/><path d="M11.9 9.3V8.4c0-.9.6-1.6 1.5-1.6h4.2c.9 0 1.5.7 1.5 1.6v.9h-1.6V8.6h-4V9.3z" fill="#fff"/><path d="M9.5 11h12.4v10.2c0 .8-.6 1.3-1.3 1.3H10.8c-.7 0-1.3-.5-1.3-1.3z" fill="#fff"/><g fill="#e74c3c"><rect x="12.8" y="12.2" width="1.1" height="7.8" rx=".5"/><rect x="15.2" y="12.2" width="1.1" height="7.8" rx=".5"/><rect x="17.7" y="12.2" width="1.1" height="7.8" rx=".5"/></g></svg></span></td></tr>
<tr><td><span class="cb"></span></td><td>313</td><td>QTUM</td><td>QTUM/量子</td><td></td><td>虚拟币</td><td>5.92500000</td><td>2022-03-11 22:03:09</td><td><span class="lab" style="background:#18bc9c">开启</span></td><td><span class="lab" style="background:#18bc9c">启用</span></td><td>Invalid date</td><td><span class="ob" style="background:#18bc9c"><svg class="abs" style="left:0;top:0" width="32" height="32" viewBox="0 0 32 32"><path d="M7.6 17.8L19.25 6.15 23.7 10.6 12.2 22.1 7.3 22.6z" fill="#fff"/><path d="M17.1 8.3L21.6 12.8" stroke="#18bc9c" stroke-width="0.9"/><path d="M9.6 18.6L11.7 20.7" stroke="#18bc9c" stroke-width="1.1"/></svg></span><span class="ob" style="background:#e74c3c;margin-left:5px"><svg class="abs" style="left:0;top:0" width="32" height="32" viewBox="0 0 32 32"><rect x="8" y="9.1" width="15" height="2.2" rx="1" fill="#fff"/><path d="M11.9 9.3V8.4c0-.9.6-1.6 1.5-1.6h4.2c.9 0 1.5.7 1.5 1.6v.9h-1.6V8.6h-4V9.3z" fill="#fff"/><path d="M9.5 11h12.4v10.2c0 .8-.6 1.3-1.3 1.3H10.8c-.7 0-1.3-.5-1.3-1.3z" fill="#fff"/><g fill="#e74c3c"><rect x="12.8" y="12.2" width="1.1" height="7.8" rx=".5"/><rect x="15.2" y="12.2" width="1.1" height="7.8" rx=".5"/><rect x="17.7" y="12.2" width="1.1" height="7.8" rx=".5"/></g></svg></span></td></tr>
<tr><td><span class="cb"></span></td><td>312</td><td>OMG</td><td>OMG/嫩模币</td><td></td><td>虚拟币</td><td>4.14800000</td><td>2022-03-11 22:03:09</td><td><span class="lab" style="background:#18bc9c">开启</span></td><td><span class="lab" style="background:#18bc9c">启用</span></td><td>Invalid date</td><td><span class="ob" style="background:#18bc9c"><svg class="abs" style="left:0;top:0" width="32" height="32" viewBox="0 0 32 32"><path d="M7.6 17.8L19.25 6.15 23.7 10.6 12.2 22.1 7.3 22.6z" fill="#fff"/><path d="M17.1 8.3L21.6 12.8" stroke="#18bc9c" stroke-width="0.9"/><path d="M9.6 18.6L11.7 20.7" stroke="#18bc9c" stroke-width="1.1"/></svg></span><span class="ob" style="background:#e74c3c;margin-left:5px"><svg class="abs" style="left:0;top:0" width="32" height="32" viewBox="0 0 32 32"><rect x="8" y="9.1" width="15" height="2.2" rx="1" fill="#fff"/><path d="M11.9 9.3V8.4c0-.9.6-1.6 1.5-1.6h4.2c.9 0 1.5.7 1.5 1.6v.9h-1.6V8.6h-4V9.3z" fill="#fff"/><path d="M9.5 11h12.4v10.2c0 .8-.6 1.3-1.3 1.3H10.8c-.7 0-1.3-.5-1.3-1.3z" fill="#fff"/><g fill="#e74c3c"><rect x="12.8" y="12.2" width="1.1" height="7.8" rx=".5"/><rect x="15.2" y="12.2" width="1.1" height="7.8" rx=".5"/><rect x="17.7" y="12.2" width="1.1" height="7.8" rx=".5"/></g></svg></span></td></tr>
<tr><td><span class="cb"></span></td><td>311</td><td>XMR</td><td>XMR/门罗币</td><td></td><td>虚拟币</td><td>171.200000</td><td>2022-03-11 22:03:09</td><td><span class="lab" style="background:#18bc9c">开启</span></td><td><span class="lab" style="background:#18bc9c">启用</span></td><td>Invalid date</td><td><span class="ob" style="background:#18bc9c"><svg class="abs" style="left:0;top:0" width="32" height="32" viewBox="0 0 32 32"><path d="M7.6 17.8L19.25 6.15 23.7 10.6 12.2 22.1 7.3 22.6z" fill="#fff"/><path d="M17.1 8.3L21.6 12.8" stroke="#18bc9c" stroke-width="0.9"/><path d="M9.6 18.6L11.7 20.7" stroke="#18bc9c" stroke-width="1.1"/></svg></span><span class="ob" style="background:#e74c3c;margin-left:5px"><svg class="abs" style="left:0;top:0" width="32" height="32" viewBox="0 0 32 32"><rect x="8" y="9.1" width="15" height="2.2" rx="1" fill="#fff"/><path d="M11.9 9.3V8.4c0-.9.6-1.6 1.5-1.6h4.2c.9 0 1.5.7 1.5 1.6v.9h-1.6V8.6h-4V9.3z" fill="#fff"/><path d="M9.5 11h12.4v10.2c0 .8-.6 1.3-1.3 1.3H10.8c-.7 0-1.3-.5-1.3-1.3z" fill="#fff"/><g fill="#e74c3c"><rect x="12.8" y="12.2" width="1.1" height="7.8" rx=".5"/><rect x="15.2" y="12.2" width="1.1" height="7.8" rx=".5"/><rect x="17.7" y="12.2" width="1.1" height="7.8" rx=".5"/></g></svg></span></td></tr>
<tr><td><span class="cb"></span></td><td>310</td><td>XLM</td><td>XLM/恒星币</td><td></td><td>虚拟币</td><td>0.17730000</td><td>2022-03-11 22:03:09</td><td><span class="lab" style="background:#18bc9c">开启</span></td><td><span class="lab" style="background:#18bc9c">启用</span></td><td>Invalid date</td><td><span class="ob" style="background:#18bc9c"><svg class="abs" style="left:0;top:0" width="32" height="32" viewBox="0 0 32 32"><path d="M7.6 17.8L19.25 6.15 23.7 10.6 12.2 22.1 7.3 22.6z" fill="#fff"/><path d="M17.1 8.3L21.6 12.8" stroke="#18bc9c" stroke-width="0.9"/><path d="M9.6 18.6L11.7 20.7" stroke="#18bc9c" stroke-width="1.1"/></svg></span><span class="ob" style="background:#e74c3c;margin-left:5px"><svg class="abs" style="left:0;top:0" width="32" height="32" viewBox="0 0 32 32"><rect x="8" y="9.1" width="15" height="2.2" rx="1" fill="#fff"/><path d="M11.9 9.3V8.4c0-.9.6-1.6 1.5-1.6h4.2c.9 0 1.5.7 1.5 1.6v.9h-1.6V8.6h-4V9.3z" fill="#fff"/><path d="M9.5 11h12.4v10.2c0 .8-.6 1.3-1.3 1.3H10.8c-.7 0-1.3-.5-1.3-1.3z" fill="#fff"/><g fill="#e74c3c"><rect x="12.8" y="12.2" width="1.1" height="7.8" rx=".5"/><rect x="15.2" y="12.2" width="1.1" height="7.8" rx=".5"/><rect x="17.7" y="12.2" width="1.1" height="7.8" rx=".5"/></g></svg></span></td></tr>
<tr><td><span class="cb"></span></td><td>309</td><td>SUSHI</td><td>SUSHI寿司</td><td></td><td>虚拟币</td><td>1.08600000</td><td>2020-10-02 21:31:45</td><td><span class="lab" style="background:#18bc9c">开启</span></td><td><span class="lab" style="background:#e74c3c">禁用</span></td><td>Invalid date</td><td><span class="ob" style="background:#18bc9c"><svg class="abs" style="left:0;top:0" width="32" height="32" viewBox="0 0 32 32"><path d="M7.6 17.8L19.25 6.15 23.7 10.6 12.2 22.1 7.3 22.6z" fill="#fff"/><path d="M17.1 8.3L21.6 12.8" stroke="#18bc9c" stroke-width="0.9"/><path d="M9.6 18.6L11.7 20.7" stroke="#18bc9c" stroke-width="1.1"/></svg></span><span class="ob" style="background:#e74c3c;margin-left:5px"><svg class="abs" style="left:0;top:0" width="32" height="32" viewBox="0 0 32 32"><rect x="8" y="9.1" width="15" height="2.2" rx="1" fill="#fff"/><path d="M11.9 9.3V8.4c0-.9.6-1.6 1.5-1.6h4.2c.9 0 1.5.7 1.5 1.6v.9h-1.6V8.6h-4V9.3z" fill="#fff"/><path d="M9.5 11h12.4v10.2c0 .8-.6 1.3-1.3 1.3H10.8c-.7 0-1.3-.5-1.3-1.3z" fill="#fff"/><g fill="#e74c3c"><rect x="12.8" y="12.2" width="1.1" height="7.8" rx=".5"/><rect x="15.2" y="12.2" width="1.1" height="7.8" rx=".5"/><rect x="17.7" y="12.2" width="1.1" height="7.8" rx=".5"/></g></svg></span></td></tr>
<tr><td><span class="cb"></span></td><td>308</td><td>DOT</td><td>DOT/波卡</td><td></td><td>虚拟币</td><td>18.0600000</td><td>2022-03-11 22:03:09</td><td><span class="lab" style="background:#18bc9c">开启</span></td><td><span class="lab" style="background:#18bc9c">启用</span></td><td>Invalid date</td><td><span class="ob" style="background:#18bc9c"><svg class="abs" style="left:0;top:0" width="32" height="32" viewBox="0 0 32 32"><path d="M7.6 17.8L19.25 6.15 23.7 10.6 12.2 22.1 7.3 22.6z" fill="#fff"/><path d="M17.1 8.3L21.6 12.8" stroke="#18bc9c" stroke-width="0.9"/><path d="M9.6 18.6L11.7 20.7" stroke="#18bc9c" stroke-width="1.1"/></svg></span><span class="ob" style="background:#e74c3c;margin-left:5px"><svg class="abs" style="left:0;top:0" width="32" height="32" viewBox="0 0 32 32"><rect x="8" y="9.1" width="15" height="2.2" rx="1" fill="#fff"/><path d="M11.9 9.3V8.4c0-.9.6-1.6 1.5-1.6h4.2c.9 0 1.5.7 1.5 1.6v.9h-1.6V8.6h-4V9.3z" fill="#fff"/><path d="M9.5 11h12.4v10.2c0 .8-.6 1.3-1.3 1.3H10.8c-.7 0-1.3-.5-1.3-1.3z" fill="#fff"/><g fill="#e74c3c"><rect x="12.8" y="12.2" width="1.1" height="7.8" rx=".5"/><rect x="15.2" y="12.2" width="1.1" height="7.8" rx=".5"/><rect x="17.7" y="12.2" width="1.1" height="7.8" rx=".5"/></g></svg></span></td></tr>
<tr><td><span class="cb"></span></td><td>307</td><td>XRP</td><td>XRP/瑞波币</td><td></td><td>虚拟币</td><td>0.73960000</td><td>2022-03-11 22:03:09</td><td><span class="lab" style="background:#18bc9c">开启</span></td><td><span class="lab" style="background:#18bc9c">启用</span></td><td>Invalid date</td><td><span class="ob" style="background:#18bc9c"><svg class="abs" style="left:0;top:0" width="32" height="32" viewBox="0 0 32 32"><path d="M7.6 17.8L19.25 6.15 23.7 10.6 12.2 22.1 7.3 22.6z" fill="#fff"/><path d="M17.1 8.3L21.6 12.8" stroke="#18bc9c" stroke-width="0.9"/><path d="M9.6 18.6L11.7 20.7" stroke="#18bc9c" stroke-width="1.1"/></svg></span><span class="ob" style="background:#e74c3c;margin-left:5px"><svg class="abs" style="left:0;top:0" width="32" height="32" viewBox="0 0 32 32"><rect x="8" y="9.1" width="15" height="2.2" rx="1" fill="#fff"/><path d="M11.9 9.3V8.4c0-.9.6-1.6 1.5-1.6h4.2c.9 0 1.5.7 1.5 1.6v.9h-1.6V8.6h-4V9.3z" fill="#fff"/><path d="M9.5 11h12.4v10.2c0 .8-.6 1.3-1.3 1.3H10.8c-.7 0-1.3-.5-1.3-1.3z" fill="#fff"/><g fill="#e74c3c"><rect x="12.8" y="12.2" width="1.1" height="7.8" rx=".5"/><rect x="15.2" y="12.2" width="1.1" height="7.8" rx=".5"/><rect x="17.7" y="12.2" width="1.1" height="7.8" rx=".5"/></g></svg></span></td></tr>
    </tbody>
  </table>

  <!-- pagination -->
  <div class="abs" style="left:386px;top:1097px;font-size:19.6px;line-height:30px;color:#333;white-space:nowrap;word-spacing:-1px">显示第 1 到第 10 条记录<span style="display:inline-block;width:20px">,</span>总共 18 条记录 每页显示</div>
  <div class="abs" style="left:837px;top:1091px;width:75px;height:46px;border:1px solid #ddd;border-radius:4px;background:#f4f4f4;font-size:18.2px;line-height:44px;padding-left:18px;color:#333">10<svg class="abs" style="left:44px;top:19px" width="11" height="7" viewBox="0 0 11 7"><path d="M0 6.5h11L5.5 0z" fill="#333"/></svg></div>
  <div class="abs" style="left:917px;top:1097px;font-size:19.6px;line-height:30px;color:#333;white-space:nowrap">条记录</div>
  <div class="abs" style="left:2130px;top:1087px;width:286px;height:48px;border:1px solid #ddd;border-radius:4px;background:#fafafa">
    <div class="abs" style="left:94px;top:-1px;width:49px;height:48px;background:#2c3e50"></div>
    <div class="abs" style="left:189px;top:0;width:1px;height:46px;background:#ddd"></div>
    <span class="abs" style="left:0;top:0;width:94px;text-align:center;line-height:46px;font-size:19.6px;color:#666">上一页</span>
    <span class="abs" style="left:94px;top:0;width:49px;text-align:center;line-height:46px;font-size:19.6px;color:#fff">1</span>
    <span class="abs" style="left:143px;top:0;width:46px;text-align:center;line-height:46px;font-size:19.6px;color:#666">2</span>
    <span class="abs" style="left:190px;top:0;width:95px;text-align:center;line-height:46px;font-size:19.6px;color:#666">下一页</span>
  </div>
</div>
</body></html>
